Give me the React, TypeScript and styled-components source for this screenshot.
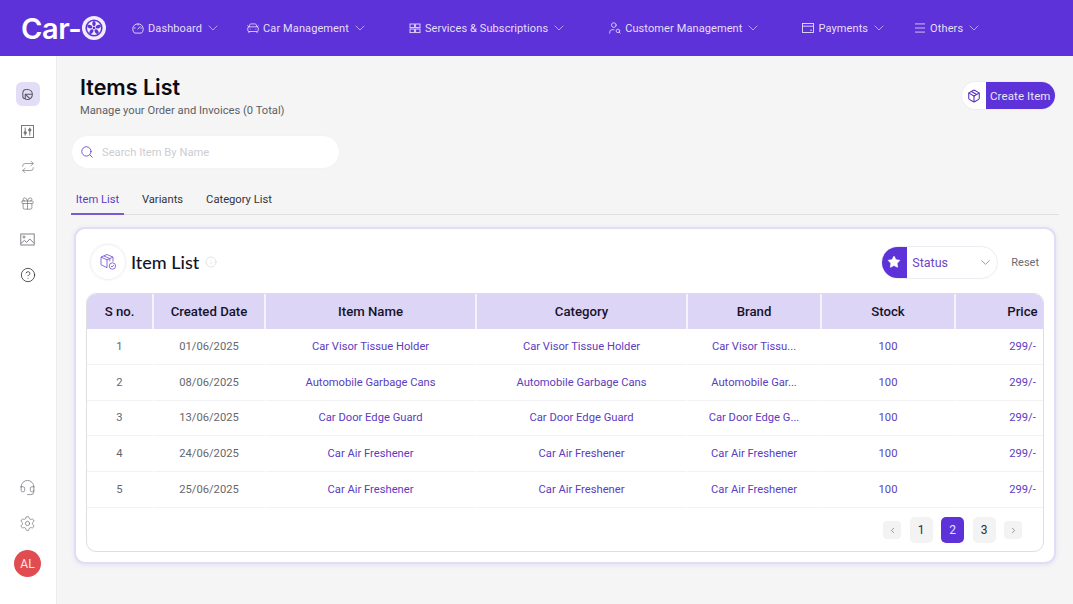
import React from "react";
import styled, { createGlobalStyle } from "styled-components";
import {
  CarFront, ChevronDown, ChevronLeft, ChevronRight, CircleHelp, Gift, Headset,
  Info, Menu, Repeat, Search, Settings, Star, UserSearch, Package,
} from "lucide-react";

const Global = createGlobalStyle`
  html, body { margin: 0; padding: 0; background: #f5f5f5; }
  body { font-family: Roboto, "Liberation Sans", sans-serif; overflow: hidden; }
  * { box-sizing: border-box; }
`;

const Page = styled.div`
  width: 1073px;
  height: 604px;
  display: flex;
  flex-direction: column;
  overflow: hidden;
`;
const Header = styled.header`
  height: 56px;
  flex: none;
  background: #5d32d8;
  display: flex;
  align-items: center;
  padding-left: 21px;
  color: #e6dffa;
`;
const Logo = styled.div`
  width: 110px;
  display: flex;
  align-items: center;
  color: #fff;
  font: 600 29px/1 Inter, sans-serif;
  letter-spacing: -0.4px;
`;
const NavItem = styled.div<{ $left: number }>`
  margin-left: ${(p) => p.$left}px;
  display: flex;
  align-items: center;
  font-size: 11px;
  letter-spacing: 0.1px;
  white-space: nowrap;
  svg.lead { margin-right: 3px; }
  svg.chev { margin-left: 3px; }
`;
const Body = styled.div`
  flex: 1;
  display: flex;
  min-height: 0;
`;
const Sidebar = styled.aside`
  width: 57px;
  flex: none;
  background: #fff;
  border-right: 1px solid #ececee;
  display: flex;
  flex-direction: column;
  align-items: center;
  padding: 26px 1px 27px 0;
`;
const SideButton = styled.div<{ $active?: boolean; $gap?: number }>`
  width: 24px;
  height: 24px;
  margin-bottom: ${(p) => p.$gap ?? 12}px;
  border-radius: 6px;
  display: flex;
  align-items: center;
  justify-content: center;
  background: ${(p) => (p.$active ? "#e3ddf7" : "transparent")};
  color: #6f6f77;
`;
const SideSpacer = styled.div`
  flex: 1;
`;
const Avatar = styled.div`
  width: 27px;
  height: 27px;
  border-radius: 50%;
  background: #e04c4f;
  color: #fbe9e9;
  font-size: 12px;
  display: flex;
  align-items: center;
  justify-content: center;
`;
const Main = styled.main`
  flex: 1;
  min-width: 0;
  padding: 18px 14px 0 15px;
  display: flex;
  flex-direction: column;
`;
const TitleRow = styled.div`
  display: flex;
  justify-content: space-between;
  align-items: flex-start;
  padding-left: 8px;
  padding-right: 4px;
`;
const TitleBlock = styled.div`
  display: flex;
  flex-direction: column;
`;
const Title = styled.h1`
  margin: 0;
  font: 600 21.5px/26px Inter, sans-serif;
  color: #0b0b14;
`;
const Subtitle = styled.div`
  margin-top: 3px;
  font-size: 11.2px;
  line-height: 16px;
  color: #5f5f66;
`;
const CreateButton = styled.div`
  margin-top: 8px;
  height: 27px;
  display: flex;
  border-radius: 14px;
  overflow: hidden;
  box-shadow: 0 0 0 1px #ececf2;
`;
const CreateIcon = styled.div`
  width: 24px;
  background: #fff;
  display: flex;
  align-items: center;
  justify-content: center;
  color: #4f2bc0;
`;
const CreateLabel = styled.div`
  width: 69px;
  background: #5d32d8;
  color: #e9e3fb;
  font-size: 11.5px;
  letter-spacing: 0.1px;
  display: flex;
  align-items: center;
  padding-left: 4px;
`;
const SearchBox = styled.div`
  margin-top: 17px;
  width: 267px;
  height: 32px;
  background: #fff;
  border-radius: 16px;
  display: flex;
  align-items: center;
  gap: 8px;
  padding-left: 8px;
  color: #6a45d0;
  font-size: 11.2px;
  box-shadow: 0 0 2px #eeeef0;
`;
const Placeholder = styled.span`
  color: #cdcdd2;
`;
const Tabs = styled.div`
  margin-top: 13px;
  height: 34px;
  display: flex;
  border-bottom: 1px solid #dfdfe3;
`;
const Tab = styled.div<{ $active?: boolean; $width: number; $shift?: number }>`
  width: ${(p) => p.$width}px;
  margin-left: ${(p) => p.$shift ?? 0}px;
  height: 34px;
  padding-top: 12px;
  text-align: center;
  font-size: 11.2px;
  line-height: 14px;
  color: ${(p) => (p.$active ? "#5d3cc4" : "#33333d")};
  border-bottom: 2px solid ${(p) => (p.$active ? "#7a5bd0" : "transparent")};
`;
const Card = styled.section`
  margin: 12px 3px 0 2px;
  height: 337px;
  background: #fff;
  border: 2px solid #e2dcf6;
  border-radius: 11px;
  box-shadow: 0 1px 5px rgba(110, 80, 220, 0.12);
  padding: 15px 10px 0;
  display: flex;
  flex-direction: column;
`;
const CardHead = styled.div`
  height: 36px;
  display: flex;
  align-items: center;
  margin-bottom: 13px;
`;
const BoxIcon = styled.div`
  width: 36px;
  height: 36px;
  border-radius: 50%;
  border: 1px solid #f0f0f3;
  box-shadow: 0 0 3px #f0f0f3;
  margin-left: 4px;
  display: flex;
  align-items: center;
  justify-content: center;
`;
const CardTitle = styled.div`
  margin: 0 6px 0 5px;
  font: 500 18px/1 Lato, sans-serif;
  color: #14141f;
`;
const HeadSpacer = styled.div`
  flex: 1;
`;
const StatusSelect = styled.div`
  width: 117px;
  height: 33px;
  display: flex;
  align-items: center;
  border-radius: 17px;
  border: 1px solid #ececf2;
  overflow: hidden;
  color: #6a45c8;
  font-size: 12.5px;
`;
const StatusIcon = styled.div`
  width: 26px;
  height: 33px;
  background: #5d32d8;
  margin-left: -1px;
  display: flex;
  align-items: center;
  justify-content: center;
  color: #fff;
`;
const StatusLabel = styled.span`
  margin-left: 5px;
  flex: 1;
`;
const StatusChev = styled.div`
  display: flex;
  margin-right: 4px;
  color: #7a5fc9;
`;
const Reset = styled.div`
  margin: 0 5px 0 13px;
  font-size: 11px;
  color: #6b6b72;
`;
const TableFrame = styled.div`
  height: 259px;
  border: 1px solid #dedee2;
  border-radius: 10px;
  overflow: hidden;
  display: flex;
  flex-direction: column;
`;
const Scroll = styled.div`
  overflow: hidden;
`;
const Table = styled.table`
  border-collapse: separate;
  border-spacing: 0;
  table-layout: fixed;
  width: 1004px;
`;
const Th = styled.th`
  height: 35px;
  background: #ddd5f6;
  border-right: 2px solid #f4f2fc;
  font-size: 13.2px;
  font-weight: 500;
  color: #17122b;
  text-align: center;
  padding: 0;
`;
const Td = styled.td<{ $plain?: boolean }>`
  height: 35.8px;
  border-bottom: 1px solid #f2f2f4;
  border-right: 2px solid transparent;
  font-size: 11.2px;
  color: ${(p) => (p.$plain ? "#66666c" : "#5c3cc0")};
  text-align: center;
  padding: 0;
`;
const Pager = styled.div`
  flex: 1;
  display: flex;
  align-items: center;
  justify-content: flex-end;
  padding: 2px 21px 0 0;
  gap: 8.5px;
`;
const PageArrow = styled.div`
  width: 18px;
  height: 18px;
  border-radius: 4px;
  background: #f3f3f4;
  color: #77777d;
  display: flex;
  align-items: center;
  justify-content: center;
`;
const PageNum = styled.div<{ $active?: boolean }>`
  width: 23px;
  height: 26px;
  border-radius: 5px;
  background: ${(p) => (p.$active ? "#5d32d8" : "#f3f3f4")};
  color: ${(p) => (p.$active ? "#e9e3fb" : "#2b2f33")};
  font-size: 12px;
  display: flex;
  align-items: center;
  justify-content: center;
`;

const Wheel = () => (
  <svg width="24" height="24" viewBox="0 0 24 24" style={{ marginLeft: 1 }}>
    <circle cx="12" cy="12" r="12" fill="#f1edfc" />
    <circle cx="12" cy="12" r="8.6" fill="#5d32d8" />
    <circle cx="12" cy="12" r="7" fill="#f1edfc" />
    {[0, 72, 144, 216, 288].map((a) => (
      <ellipse key={a} cx="12" cy="7.6" rx="1.7" ry="2.6" fill="#5d32d8" transform={`rotate(${a} 12 12)`} />
    ))}
    <circle cx="12" cy="12" r="1.3" fill="#5d32d8" />
  </svg>
);
const GaugeIcon = () => (
  <svg className="lead" width="14" height="14" viewBox="0 0 14 14" fill="none" stroke="currentColor" strokeWidth="0.9" strokeLinecap="round">
    <path d="M3.2 11.8A5.3 5.3 0 1 1 10.8 11.8Z" />
    <path d="M7 8l2-2.4M7 3.4v.8M3.4 7h.8M9.8 7h.8" />
  </svg>
);
const PieIcon = () => (
  <svg width="15" height="15" viewBox="0 0 16 16" fill="none" stroke="#55555f" strokeWidth="1.1" strokeLinejoin="round">
    <path d="M6.6 2.6C4.4 2.6 3 4.4 3 6.6v3.2c0 1.7 1.1 2.7 2.6 2.7" />
    <path d="M6.6 2.6h1.2c3.2 0 5.4 2.3 5.4 5.4 0 3.1-2.4 5.4-5.4 5.4-1 0-1.7-.3-2.2-.9V7.8h7.5" />
    <path d="M5.6 7.8l5 4.6" />
  </svg>
);
const SliderBox = () => (
  <svg width="15" height="15" viewBox="0 0 15 15" fill="none" stroke="#77777f" strokeWidth="1">
    <rect x="1.5" y="1.5" width="12" height="12" />
    <path d="M5.2 3.6v8M9.8 3.6v8" />
    <circle cx="5.2" cy="8.8" r="1.2" fill="#77777f" />
    <circle cx="9.8" cy="6" r="1.2" fill="#77777f" />
  </svg>
);
const PictureIcon = () => (
  <svg width="15" height="15" viewBox="0 0 15 15" fill="none" stroke="#77777f" strokeWidth="0.9">
    <rect x="0.8" y="2" width="13.4" height="11" />
    <circle cx="4" cy="5" r="1" />
    <path d="M1 11.4l3.4-3 2.4 2 3-3.4 4.4 4.4" />
  </svg>
);
const GridIcon = () => (
  <svg className="lead" width="14" height="14" viewBox="0 0 14 14" fill="none" stroke="currentColor" strokeWidth="0.9">
    <rect x="2" y="3" width="4.4" height="3.6" />
    <rect x="7.6" y="3" width="4.4" height="3.6" />
    <rect x="2" y="8" width="4.4" height="3.6" />
    <rect x="7.6" y="8" width="4.4" height="3.6" />
  </svg>
);
const CardIcon = () => (
  <svg className="lead" width="14" height="14" viewBox="0 0 14 14" fill="none" stroke="currentColor" strokeWidth="0.9">
    <rect x="1.5" y="2.5" width="11" height="9" />
    <path d="M1.5 5.2h11M9.2 9.2h1.8" />
  </svg>
);
const BoxCheck = () => (
  <svg width="18" height="18" viewBox="0 0 18 18" fill="none" stroke="#7d5cd6" strokeWidth="0.9" strokeLinejoin="round">
    <path d="M8 1.5l6 2.6v4.6M8 1.5L2 4.1v7.6l6 3M2 4.1l6 2.7 6-2.7M8 6.8v7.9M4.8 2.9l6 2.7v2.6" />
    <circle cx="13.4" cy="13" r="3.2" />
    <path d="M12 13l1 1 1.8-1.9" />
  </svg>
);

const lucide = (Icon: typeof Menu) => () => <Icon className="lead" size={14} strokeWidth={1.4} />;
const nav = [
  { left: 0, icon: GaugeIcon, label: "Dashboard" },
  { left: 25, icon: lucide(CarFront), label: "Car Management" },
  { left: 40, icon: GridIcon, label: "Services & Subscriptions" },
  { left: 41, icon: lucide(UserSearch), label: "Customer Management" },
  { left: 40, icon: CardIcon, label: "Payments" },
  { left: 26, icon: lucide(Menu), label: "Others" },
];
const rows = [
  ["1", "01/06/2025", "Car Visor Tissue Holder", "Car Visor Tissu..."],
  ["2", "08/06/2025", "Automobile Garbage Cans", "Automobile Gar..."],
  ["3", "13/06/2025", "Car Door Edge Guard", "Car Door Edge G..."],
  ["4", "24/06/2025", "Car Air Freshener", "Car Air Freshener"],
  ["5", "25/06/2025", "Car Air Freshener", "Car Air Freshener"],
];
const cols = [67, 112, 211, 211, 134, 134, 135];
const heads = ["S no.", "Created Date", "Item Name", "Category", "Brand", "Stock", "Price"];

export default function App() {
  return (
    <Page>
      <Global />
      <Header>
        <Logo>
          Car-
          <Wheel />
        </Logo>
        {nav.map(({ left, icon: Icon, label }) => (
          <NavItem key={label} $left={left}>
            <Icon />
            {label}
            <ChevronDown className="chev" size={16} strokeWidth={1} />
          </NavItem>
        ))}
      </Header>
      <Body>
        <Sidebar>
          <SideButton $active $gap={13}><PieIcon /></SideButton>
          <SideButton><SliderBox /></SideButton>
          <SideButton><Repeat size={14} strokeWidth={1.1} /></SideButton>
          <SideButton><Gift size={15} strokeWidth={1.1} /></SideButton>
          <SideButton><PictureIcon /></SideButton>
          <SideButton><CircleHelp size={16} strokeWidth={1.2} color="#2f2f38" /></SideButton>
          <SideSpacer />
          <SideButton><Headset size={17} strokeWidth={1} /></SideButton>
          <SideButton $gap={15}><Settings size={17} strokeWidth={1} /></SideButton>
          <Avatar>AL</Avatar>
        </Sidebar>
        <Main>
          <TitleRow>
            <TitleBlock>
              <Title>Items List</Title>
              <Subtitle>Manage your Order and Invoices (0 Total)</Subtitle>
            </TitleBlock>
            <CreateButton>
              <CreateIcon><Package size={14} strokeWidth={1.8} /></CreateIcon>
              <CreateLabel>Create Item</CreateLabel>
            </CreateButton>
          </TitleRow>
          <SearchBox>
            <Search size={14} strokeWidth={1.5} />
            <Placeholder>Search Item By Name</Placeholder>
          </SearchBox>
          <Tabs>
            <Tab $active $width={53} $shift={-1}>Item List</Tab>
            <Tab $width={77}>Variants</Tab>
            <Tab $width={76}>Category List</Tab>
          </Tabs>
          <Card>
            <CardHead>
              <BoxIcon><BoxCheck /></BoxIcon>
              <CardTitle>Item List</CardTitle>
              <Info size={12} strokeWidth={1} color="#c8c8cc" />
              <HeadSpacer />
              <StatusSelect>
                <StatusIcon><Star size={14} fill="#fff" strokeWidth={1} /></StatusIcon>
                <StatusLabel>Status</StatusLabel>
                <StatusChev><ChevronDown size={15} strokeWidth={1.1} /></StatusChev>
              </StatusSelect>
              <Reset>Reset</Reset>
            </CardHead>
            <TableFrame>
              <Scroll>
                <Table>
                  <colgroup>
                    {cols.map((w, i) => <col key={i} width={w} />)}
                  </colgroup>
                  <thead>
                    <tr>{heads.map((h) => <Th key={h}>{h}</Th>)}</tr>
                  </thead>
                  <tbody>
                    {rows.map(([n, date, name, brand]) => (
                      <tr key={n}>
                        <Td $plain>{n}</Td>
                        <Td $plain>{date}</Td>
                        <Td>{name}</Td>
                        <Td>{name}</Td>
                        <Td>{brand}</Td>
                        <Td>100</Td>
                        <Td>299/-</Td>
                      </tr>
                    ))}
                  </tbody>
                </Table>
              </Scroll>
              <Pager>
                <PageArrow><ChevronLeft size={9} /></PageArrow>
                <PageNum>1</PageNum>
                <PageNum $active>2</PageNum>
                <PageNum>3</PageNum>
                <PageArrow><ChevronRight size={9} /></PageArrow>
              </Pager>
            </TableFrame>
          </Card>
        </Main>
      </Body>
    </Page>
  );
}
